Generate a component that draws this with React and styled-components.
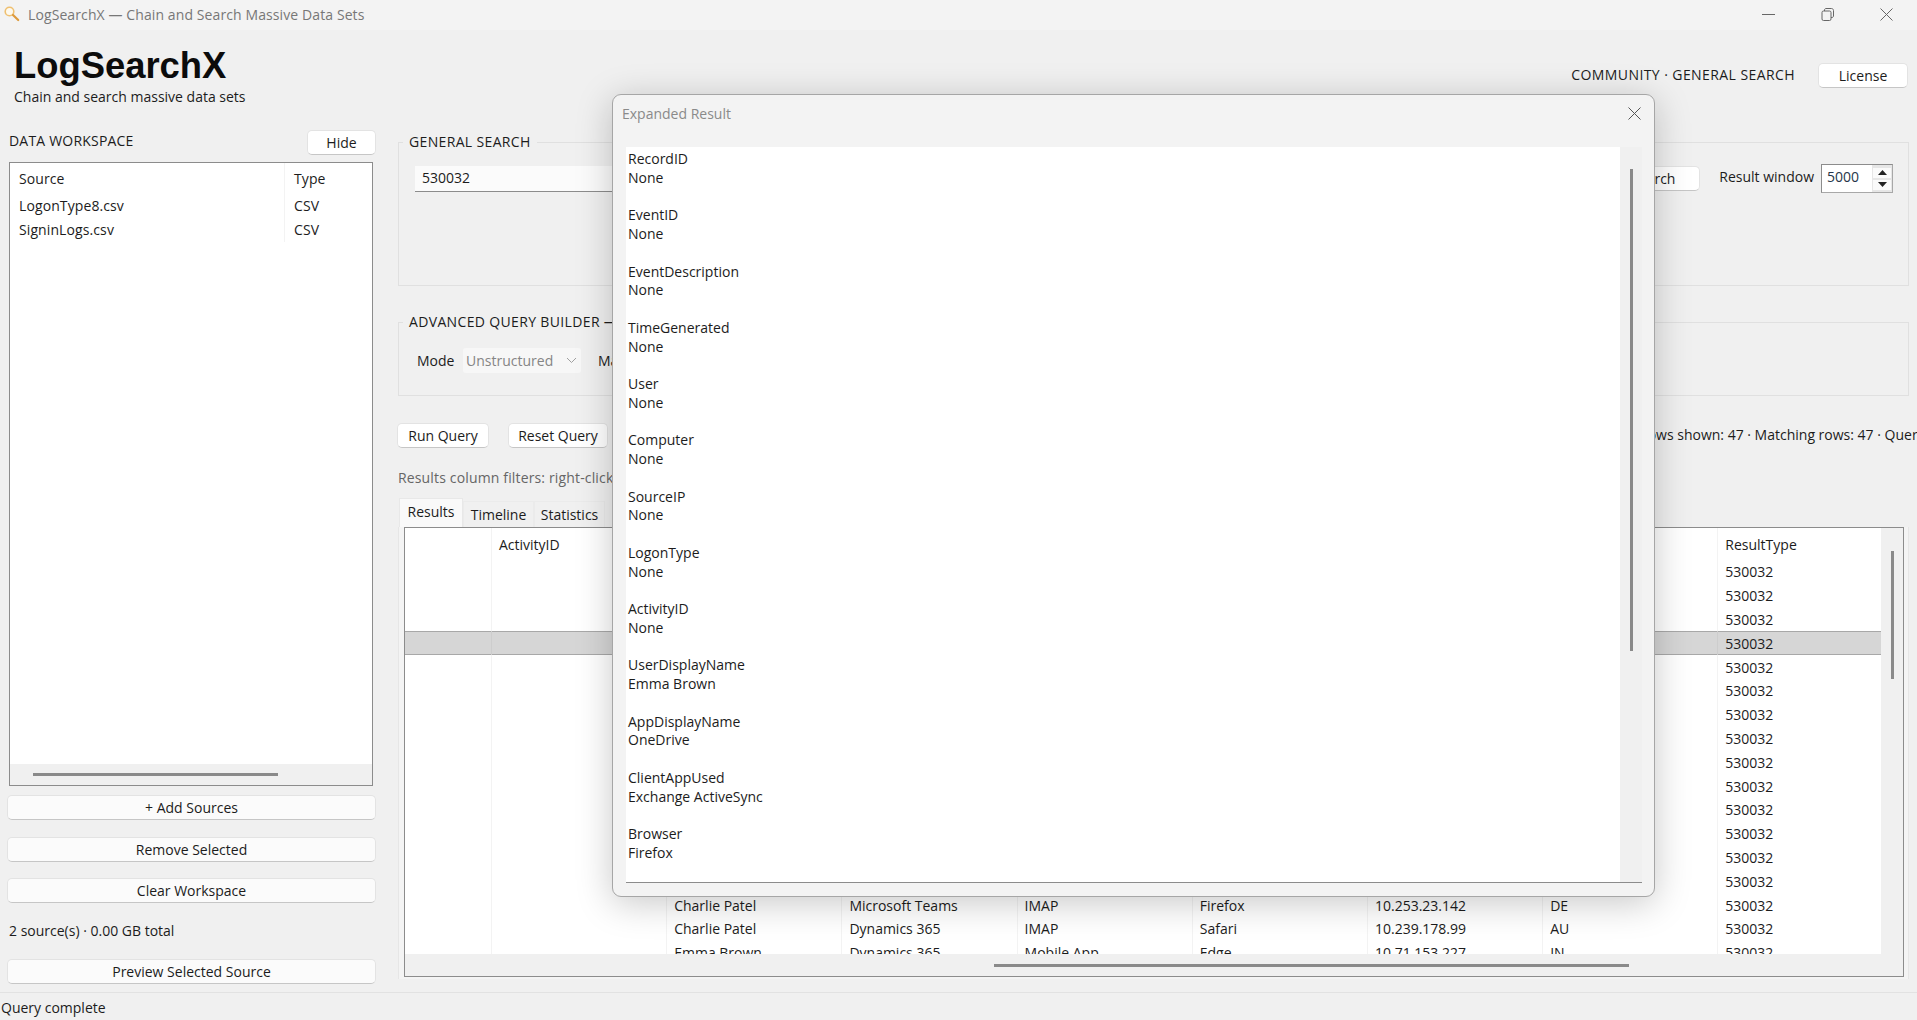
import React from "react"
import styled, { createGlobalStyle } from "styled-components"

const GlobalStyle = createGlobalStyle`
  html, body {
    margin: 0;
    padding: 0;
    background: #f0f0f0;
  }
  * {
    box-sizing: border-box;
  }
`

const Win = styled.div`
  position: relative;
  width: 1917px;
  height: 1020px;
  overflow: hidden;
  display: flex;
  flex-direction: column;
  background: #f0f0f0;
  color: #1c1c1c;
  font-family: "Open Sans", "Liberation Sans", sans-serif;
  font-size: 14px;
`

const TitleBar = styled.div`
  height: 30px;
  flex: none;
  display: flex;
  align-items: center;
  padding-left: 4px;
  padding-bottom: 2px;
  background: #f3f3f3;
  color: #777;
  .titleText {
    margin-left: 8px;
    letter-spacing: 0.1px;
  }
  .winControls {
    margin-left: auto;
    margin-right: 1px;
    display: flex;
    align-items: center;
    color: #666;
  }
`

const WinButton = styled.span`
  width: 59px;
  display: flex;
  justify-content: center;
`

const Header = styled.div`
  height: 100px;
  flex: none;
  display: flex;
  justify-content: space-between;
  padding: 15px 9px 0 14px;
  .brand {
    font-family: "Liberation Sans", Arial, sans-serif;
    font-size: 36.4px;
    font-weight: 700;
    line-height: 42px;
    color: #0c0c0c;
  }
  .tagline {
    line-height: 20px;
  }
  .edition {
    display: flex;
    align-items: flex-start;
    gap: 23px;
    padding-top: 18px;
    span {
      line-height: 24px;
      letter-spacing: 0.42px;
    }
  }
`

const Button = styled.button`
  height: 25px;
  width: ${(props) => props.$w || "auto"};
  padding: 0;
  border: 1px solid #e3e3e3;
  border-bottom-color: #c6c6c6;
  border-radius: 5px;
  background: ${(props) => (props.$soft ? "#fbfbfb" : "#ffffff")};
  color: #1c1c1c;
  font: inherit;
  flex: none;
`

const Main = styled.div`
  flex: 1;
  min-height: 0;
  display: flex;
`

const Sidebar = styled.div`
  width: 398px;
  flex: none;
  padding-left: 7px;
  padding-right: 22px;
  display: flex;
  flex-direction: column;
  .sideHead {
    display: flex;
    align-items: center;
    justify-content: space-between;
    height: 24px;
    padding-left: 2px;
    span {
      letter-spacing: 0.2px;
      margin-top: -3px;
    }
  }
  .total {
    height: 54px;
    margin-bottom: 1.5px;
    display: flex;
    align-items: center;
    padding-left: 2px;
  }
`

const SourceBox = styled.div`
  margin: 8px 3px 9px 2px;
  height: 624px;
  border: 1px solid #8c8c8c;
  display: flex;
  flex-direction: column;
  background: #f0f0f0;
  .sourceView {
    flex: 1;
    background: #fff;
  }
  .sourceScroll {
    height: 21px;
    display: flex;
    align-items: center;
    padding-left: 23px;
  }
`

const SourceRow = styled.div`
  display: grid;
  grid-template-columns: 274px 1fr;
  height: ${(props) => props.$h}px;
  align-items: center;
  letter-spacing: 0.1px;
  & > span {
    padding-left: 9px;
    height: 100%;
    display: flex;
    align-items: center;
  }
  & > span + span {
    border-left: 1px solid #f3f3f3;
  }
`

const SideButtons = styled.div`
  display: flex;
  flex-direction: column;
  gap: 16.5px;
`

const Handle = styled.div`
  background: #8a8a8a;
  flex: none;
  width: ${(props) => props.$w};
  height: ${(props) => props.$h};
  margin-left: ${(props) => props.$ml || 0};
  margin-top: ${(props) => props.$mt || 0};
`

const Content = styled.div`
  flex: 1;
  min-width: 0;
  padding-top: 1px;
  padding-right: 8px;
  display: flex;
  flex-direction: column;
`

const Group = styled.fieldset`
  margin: 0;
  padding: 0 15px 0 16px;
  height: ${(props) => props.$h}px;
  border: 1px solid #e0e0e0;
  min-width: 0;
  legend {
    margin-left: -12px;
    padding: 0 6px;
    line-height: 22px;
    white-space: nowrap;
    letter-spacing: 0.35px;
  }
  & + & {
    margin-top: 25px;
  }
`

const SearchRow = styled.div`
  display: flex;
  align-items: flex-start;
  margin-top: 11px;
  ${Button} {
    margin-top: 2px;
  }
  .fieldLabel {
    line-height: 26px;
    margin-left: 19px;
    margin-right: 7px;
  }
`

const SearchInput = styled.div`
  flex: 1;
  margin-top: 2px;
  height: 26px;
  line-height: 23px;
  padding-left: 7px;
  background: #fbfbfb;
  border-bottom: 1px solid #8c8c8c;
`

const Spin = styled.div`
  display: flex;
  width: 72px;
  height: 29px;
  border: 1px solid #a8a8a8;
  border-top-color: #8c8c8c;
  border-left-color: #8c8c8c;
  background: #e6e6e6;
  .spinValue {
    width: 50px;
    background: #fff;
    line-height: 24px;
    padding-left: 5px;
    color: #26364a;
  }
  .spinArrows {
    flex: 1;
    display: flex;
    flex-direction: column;
    justify-content: center;
    gap: 2px;
    padding: 0 1px 0 1px;
  }
`

const SpinStep = styled.span`
  height: 10px;
  display: flex;
  align-items: center;
  justify-content: center;
  background: #fafafa;
  color: #222;
`

const ModeRow = styled.div`
  display: flex;
  align-items: center;
  margin-top: 15px;
  .modeLabel {
    margin-left: 2px;
    width: 46px;
  }
  .matchLabel {
    margin-left: 17px;
  }
`

const Combo = styled.div`
  width: 118px;
  height: 25px;
  background: #f7f7f7;
  border-radius: 3px;
  color: #858585;
  display: flex;
  align-items: center;
  justify-content: space-between;
  padding: 0 4px 0 3px;
`

const QueryRow = styled.div`
  display: flex;
  gap: 19px;
  margin-top: 27px;
  margin-left: -1px;
  white-space: nowrap;
  .queryStatus {
    line-height: 24px;
    margin-left: 1012px;
  }
`

const FilterHint = styled.div`
  margin-top: 19px;
  line-height: 22px;
  color: #666;
  letter-spacing: 0.15px;
  white-space: nowrap;
`

const TabBar = styled.div`
  display: flex;
  align-items: flex-end;
  height: 29px;
  margin-top: 9px;
  margin-left: 1px;
`

const Tab = styled.div`
  width: ${(props) => props.$w};
  height: ${(props) => (props.$active ? "29px" : "26px")};
  display: flex;
  align-items: center;
  justify-content: center;
  padding-bottom: ${(props) => (props.$active ? "4px" : "0")};
  background: ${(props) => (props.$active ? "#f9f9f9" : "#f0f0f0")};
  border: 1px solid ${(props) => (props.$active ? "#e8e8e8" : "#ebebeb")};
  border-bottom: 0;
`

const TabPane = styled.div`
  flex: none;
  height: 452px;
  margin-left: 0;
  padding: 0 4px 2px 5px;
  background: #f4f4f4;
  border-right: 1px solid #e6e6e6;
  border-left: 1px solid #e6e6e6;
`

const ResultsBox = styled.div`
  height: 100%;
  border: 1px solid #8c8c8c;
  display: grid;
  grid-template-columns: 1fr 22px;
  grid-template-rows: 1fr 22px;
  background: #f0f0f0;
  .vGutter {
    display: flex;
    justify-content: center;
  }
  .hGutter {
    display: flex;
    align-items: center;
    grid-column: 1 / span 2;
  }
`

const Viewport = styled.div`
  overflow: hidden;
  background: #fff;
`

const GridRow = styled.div`
  display: grid;
  grid-template-columns: 86px repeat(7, 175.2px) 1fr;
  height: ${(props) => props.$h || "23.8px"};
  align-items: center;
  white-space: nowrap;
  background: ${(props) => (props.$selected ? "#d6d6d6" : "transparent")};
  box-shadow: ${(props) =>
    props.$selected ? "inset 0 1px #a8a8a8, inset 0 -1px #a8a8a8" : "none"};
  & > span {
    height: 100%;
    display: flex;
    align-items: center;
    padding-left: 7px;
    overflow: hidden;
  }
  & > span + span {
    border-left: 1px solid ${(props) => (props.$selected ? "#cdcdcd" : "#f3f3f3")};
  }
`

const StatusBar = styled.div`
  height: 28px;
  flex: none;
  padding: 2px 0 0 1px;
  display: flex;
  align-items: center;
  border-top: 1px solid #e2e2e2;
`

const Dialog = styled.div`
  position: absolute;
  left: 612px;
  top: 94px;
  width: 1043px;
  height: 803px;
  display: flex;
  flex-direction: column;
  background: #f3f3f3;
  border: 1px solid #a6a6a6;
  border-radius: 9px;
  box-shadow: 0 6px 36px rgba(0, 0, 0, 0.22);
  .dialogHead {
    height: 36px;
    flex: none;
    display: flex;
    align-items: center;
    justify-content: space-between;
    padding: 0 13px 0 9px;
    color: #8a8a8a;
    svg {
      color: #555;
    }
  }
  .dialogBody {
    margin: 16px 12px 0 13px;
    height: 736px;
    display: flex;
    border-bottom: 1px solid #8c8c8c;
  }
  .dialogText {
    flex: 1;
    background: #fff;
    padding: 3px 0 0 2px;
    overflow: hidden;
  }
  .dialogGutter {
    width: 22px;
    flex: none;
    display: flex;
    justify-content: center;
    background: #f0f0f0;
  }
`

const Field = styled.div`
  line-height: 18.75px;
  height: 56.25px;
  p {
    margin: 0;
  }
`

const TitleIcon = () => (
  <svg width="16" height="16" viewBox="0 0 16 16" fill="none">
    <circle cx="5.5" cy="5.5" r="4.3" stroke="#efc071" strokeWidth="1.6" fill="#fdf9ef" />
    <path d="M9 9 14.2 14" stroke="#dd9a3c" strokeWidth="2.2" strokeLinecap="round" />
  </svg>
)

const CloseIcon = () => (
  <svg width="13" height="13" viewBox="0 0 13 13" fill="none" stroke="currentColor">
    <path d="M.5.5 12.5 12.5M12.5.5.5 12.5" />
  </svg>
)

const MinIcon = () => (
  <svg width="13" height="13" viewBox="0 0 13 13" fill="none" stroke="currentColor">
    <path d="M0 6.5H13" />
  </svg>
)

const RestoreIcon = () => (
  <svg width="13" height="13" viewBox="0 0 13 13" fill="none" stroke="currentColor">
    <rect x="1" y="3" width="9" height="9.5" rx="1.5" />
    <path d="M3.5 3V2C3.5 1.2 4.2.5 5 .5H10.5C11.6.5 12.5 1.4 12.5 2.5V8C12.5 8.8 11.8 9.5 11 9.5H10" />
  </svg>
)

const ChevronIcon = () => (
  <svg width="11" height="7" viewBox="0 0 11 7" fill="none" stroke="#a0a0a0">
    <path d="M1 1 5.5 5.5 10 1" />
  </svg>
)

const ArrowIcon = ({ down }) => (
  <svg width="9" height="5" viewBox="0 0 9 5" fill="currentColor">
    <path d={down ? "M0 0H9L4.5 5Z" : "M0 5H9L4.5 0Z"} />
  </svg>
)

const sources = [
  ["LogonType8.csv", "CSV"],
  ["SigninLogs.csv", "CSV"],
]

const columns = ["", "ActivityID", "UserDisplayName", "AppDisplayName", "ClientAppUsed", "Browser", "IPAddress", "Location", "ResultType"]

const rows = [
  ["Alice Chen", "Outlook", "IMAP", "Chrome", "10.12.44.201", "US"],
  ["David Kim", "SharePoint", "Browser", "Edge", "10.88.14.63", "CA"],
  ["Grace Hall", "OneDrive", "POP3", "Safari", "10.45.120.7", "GB"],
  ["Emma Brown", "OneDrive", "Exchange ActiveSync", "Firefox", "10.143.9.18", "FR"],
  ["Alice Chen", "Azure Portal", "Browser", "Chrome", "10.201.6.94", "US"],
  ["Ivan Novak", "Microsoft Teams", "Mobile App", "Edge", "10.33.71.150", "DE"],
  ["Grace Hall", "Outlook", "SMTP", "Firefox", "10.67.212.40", "IN"],
  ["David Kim", "Dynamics 365", "IMAP", "Safari", "10.94.31.118", "AU"],
  ["Charlie Patel", "SharePoint", "Browser", "Chrome", "10.18.166.72", "GB"],
  ["Emma Brown", "Azure Portal", "POP3", "Edge", "10.120.58.233", "CA"],
  ["Ivan Novak", "OneDrive", "Mobile App", "Firefox", "10.76.9.181", "FR"],
  ["Alice Chen", "Outlook", "IMAP", "Safari", "10.229.47.36", "US"],
  ["Grace Hall", "Microsoft Teams", "Browser", "Chrome", "10.51.193.12", "IN"],
  ["David Kim", "Dynamics 365", "SMTP", "Edge", "10.164.80.95", "DE"],
  ["Charlie Patel", "Microsoft Teams", "IMAP", "Firefox", "10.253.23.142", "DE"],
  ["Charlie Patel", "Dynamics 365", "IMAP", "Safari", "10.239.178.99", "AU"],
  ["Emma Brown", "Dynamics 365", "Mobile App", "Edge", "10.71.153.227", "IN"],
]

const details = [
  ["RecordID", "None"],
  ["EventID", "None"],
  ["EventDescription", "None"],
  ["TimeGenerated", "None"],
  ["User", "None"],
  ["Computer", "None"],
  ["SourceIP", "None"],
  ["LogonType", "None"],
  ["ActivityID", "None"],
  ["UserDisplayName", "Emma Brown"],
  ["AppDisplayName", "OneDrive"],
  ["ClientAppUsed", "Exchange ActiveSync"],
  ["Browser", "Firefox"],
]

const App = () => (
  <Win>
    <GlobalStyle />
    <TitleBar>
      <TitleIcon />
      <span className="titleText">LogSearchX — Chain and Search Massive Data Sets</span>
      <div className="winControls">
        <WinButton><MinIcon /></WinButton>
        <WinButton><RestoreIcon /></WinButton>
        <WinButton><CloseIcon /></WinButton>
      </div>
    </TitleBar>

    <Header>
      <div>
        <div className="brand">LogSearchX</div>
        <div className="tagline">Chain and search massive data sets</div>
      </div>
      <div className="edition">
        <span>COMMUNITY · GENERAL SEARCH</span>
        <Button $w="90px">License</Button>
      </div>
    </Header>

    <Main>
      <Sidebar>
        <div className="sideHead">
          <span>DATA WORKSPACE</span>
          <Button $w="69px">Hide</Button>
        </div>
        <SourceBox>
          <div className="sourceView">
            <SourceRow $h={31}>
              <span>Source</span>
              <span>Type</span>
            </SourceRow>
            {sources.map(([name, type]) => (
              <SourceRow $h={23.8} key={name}>
                <span>{name}</span>
                <span>{type}</span>
              </SourceRow>
            ))}
          </div>
          <div className="sourceScroll">
            <Handle $w="245px" $h="3px" />
          </div>
        </SourceBox>
        <SideButtons>
          <Button $soft>+ Add Sources</Button>
          <Button $soft>Remove Selected</Button>
          <Button $soft>Clear Workspace</Button>
        </SideButtons>
        <div className="total">2 source(s) · 0.00 GB total</div>
        <Button $soft>Preview Selected Source</Button>
      </Sidebar>

      <Content>
        <Group $h={155}>
          <legend>GENERAL SEARCH</legend>
          <SearchRow>
            <SearchInput>530032</SearchInput>
            <Button $w="94px">Search</Button>
            <span className="fieldLabel">Result window</span>
            <Spin>
              <div className="spinValue">5000</div>
              <div className="spinArrows">
                <SpinStep><ArrowIcon /></SpinStep>
                <SpinStep><ArrowIcon down /></SpinStep>
              </div>
            </Spin>
          </SearchRow>
        </Group>
        <Group $h={85}>
          <legend>ADVANCED QUERY BUILDER —</legend>
          <ModeRow>
            <span className="modeLabel">Mode</span>
            <Combo>
              Unstructured
              <ChevronIcon />
            </Combo>
            <span className="matchLabel">Match</span>
          </ModeRow>
        </Group>
        <QueryRow>
          <Button $w="92px">Run Query</Button>
          <Button $w="100px">Reset Query</Button>
          <span className="queryStatus">Rows shown: 47 · Matching rows: 47 · Query complete</span>
        </QueryRow>
        <FilterHint>Results column filters: right-click a column header to filter its values.</FilterHint>
        <TabBar>
          <Tab $active $w="64px">Results</Tab>
          <Tab $w="71px">Timeline</Tab>
          <Tab $w="71px">Statistics</Tab>
        </TabBar>
        <TabPane>
          <ResultsBox>
            <Viewport>
              <GridRow $h="32px">
                {columns.map((col) => (
                  <span key={col}>{col}</span>
                ))}
              </GridRow>
              {rows.map((row, i) => (
                <GridRow key={i} $selected={i === 3}>
                  <span />
                  <span />
                  {row.map((cell, j) => (
                    <span key={j}>{cell}</span>
                  ))}
                  <span>530032</span>
                </GridRow>
              ))}
            </Viewport>
            <div className="vGutter">
              <Handle $w="3px" $h="128px" $mt="23px" />
            </div>
            <div className="hGutter">
              <Handle $w="635px" $h="3px" $ml="589px" />
            </div>
          </ResultsBox>
        </TabPane>
      </Content>
    </Main>

    <StatusBar>Query complete</StatusBar>

    <Dialog>
      <div className="dialogHead">
        <span>Expanded Result</span>
        <CloseIcon />
      </div>
      <div className="dialogBody">
        <div className="dialogText">
          {details.map(([label, value]) => (
            <Field key={label}>
              <p>{label}</p>
              <p>{value}</p>
            </Field>
          ))}
        </div>
        <div className="dialogGutter">
          <Handle $w="3px" $h="482px" $mt="22px" />
        </div>
      </div>
    </Dialog>
  </Win>
)

export default App
